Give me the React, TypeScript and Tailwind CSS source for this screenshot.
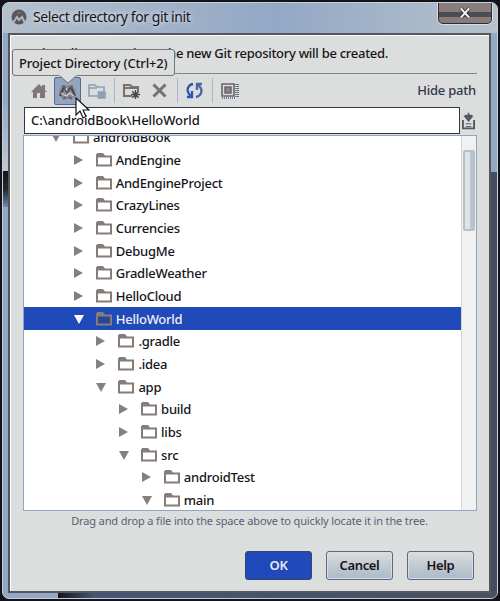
import React from "react";

type Row = { name: string; depth: number; open?: boolean; selected?: boolean };

const rows: Row[] = [
  { name: "androidBook", depth: 0, open: true },
  { name: "AndEngine", depth: 1 },
  { name: "AndEngineProject", depth: 1 },
  { name: "CrazyLines", depth: 1 },
  { name: "Currencies", depth: 1 },
  { name: "DebugMe", depth: 1 },
  { name: "GradleWeather", depth: 1 },
  { name: "HelloCloud", depth: 1 },
  { name: "HelloWorld", depth: 1, open: true, selected: true },
  { name: ".gradle", depth: 2 },
  { name: ".idea", depth: 2 },
  { name: "app", depth: 2, open: true },
  { name: "build", depth: 3 },
  { name: "libs", depth: 3 },
  { name: "src", depth: 3, open: true },
  { name: "androidTest", depth: 4 },
  { name: "main", depth: 4, open: true },
];

function Arrow({ open, selected }: { open?: boolean; selected?: boolean }) {
  return (
    <svg width="10" height="10" viewBox="0 0 10 10" className="shrink-0" fill={selected ? "#fff" : "#877f7c"}>
      {open ? <path d="M0 1h10L5 10z" /> : <path d="M0 0v10l9-5z" />}
    </svg>
  );
}

function Folder({ selected }: { selected?: boolean }) {
  return (
    <svg width="16" height="14" viewBox="0 0 16 14" className="ml-[12px] shrink-0">
      <path d="M0 13.5V1h1V0h6l2 2.5h7v11z" fill="#857d7a" />
      <path d="M2 4.5h12v7H2z" fill={selected ? "#2a4697" : "#fff"} />
    </svg>
  );
}

function TreeRow({ row }: { row: Row }) {
  return (
    <div className={"flex h-[22.67px] items-center " + (row.selected ? "bg-[#2049b9] text-[#eef0f6]" : "text-[#17151b]")}>
      <div className="flex items-center" style={{ paddingLeft: 27 + row.depth * 22.7 }}>
        <Arrow open={row.open} selected={row.selected} />
        <Folder selected={row.selected} />
        <span className="ml-1 text-[13px] font-medium leading-5 tracking-[-0.24px]">{row.name}</span>
      </div>
    </div>
  );
}

function Toolbar() {
  return (
    <div className="flex h-[33px] shrink-0 items-center pl-[21px] pr-[13px]">
      <svg width="16" height="16" viewBox="0 0 16 16" fill="#7e7775">
        <path d="M0 9 8 1l3 3V2h3v5l2 2h-2v6H9v-5H6v5H2V9z" />
      </svg>
      <div className="ml-[7px] flex h-[28px] w-[27px] items-center justify-center rounded-[2px] border border-[#526b8a] bg-[#91a5c0]">
        <svg width="21" height="22" viewBox="0 0 21 22" fill="none">
          <path d="M2 14C2 2 19 2 19 14l-4 5H6z" fill="#858890" />
          <path d="m3 16 4-9 3 5 4-5 4 9" stroke="#4b494f" strokeWidth="2" />
          <path d="m4 13 5 3 4-3 4 3M9 8l1 3" stroke="#c9ced5" strokeWidth="1.3" />
          <path d="m5 6 3 2m8-2-3 2M6 19l3-2m6 2-3-2" stroke="#635e61" strokeWidth="1.6" />
        </svg>
      </div>
      <svg width="18" height="16" viewBox="0 0 18 16" className="ml-[7px]" fill="none" stroke="#8f9fb4" strokeWidth="1.6">
        <path d="M10 13H1V2h6l2 2h7v4" /><path d="M1 5h8" />
        <path d="M10.5 9H17v6h-6.5z" fill="#8f9fb4" />
      </svg>
      <div className="ml-[8px] h-[25px] w-px bg-[#a7b6c8]" />
      <svg width="18" height="16" viewBox="0 0 18 16" className="ml-[8px]" fill="none" stroke="#777170" strokeWidth="2">
        <path d="M9 13H1V2h6l2 2h6v4M1 5h14" />
        <path d="M12.5 7v9M8 11.5h9M9.3 8.3l6.4 6.4M15.7 8.3l-6.4 6.4" stroke="#4b484c" strokeWidth="1.4" />
      </svg>
      <svg width="15" height="15" viewBox="0 0 15 15" className="ml-[11px]" stroke="#777170" strokeWidth="3">
        <path d="m1.5 1.5 12 12m0-12-12 12" />
      </svg>
      <div className="ml-[10px] h-[25px] w-px bg-[#a7b6c8]" />
      <svg width="17" height="17" viewBox="0 0 17 17" className="ml-[8px]" fill="none" strokeWidth="2.3">
        <path d="M7 2C2 3 0 8 3 12l2 2M1 15h5V9" stroke="#2c55b4" />
        <path d="M10 15c5-1 7-6 4-10l-2-2M16 2h-5v6" stroke="#4668a5" />
      </svg>
      <div className="ml-[9px] h-[25px] w-px bg-[#a7b6c8]" />
      <svg width="18" height="16" viewBox="0 0 18 16" className="ml-[8px]" fill="none" stroke="#686568">
        <path d="M1 1h12v12H1z" strokeWidth="1.6" /><path d="M4 4h6v6H4z" fill="#8a8483" strokeWidth="1.5" />
        <path d="M15 1v14M1 15h14" stroke="#6d829f" strokeWidth="2" strokeDasharray="1 1" />
        <path d="M17 1v14" strokeWidth="2" strokeDasharray="1 1" />
      </svg>
      <span className="ml-auto text-[13px] font-medium tracking-[-0.22px] text-[#30394e]">Hide path</span>
    </div>
  );
}

function Button({ children, primary }: { children: React.ReactNode; primary?: boolean }) {
  return (
    <button
      className={
        "h-[29px] w-[67px] rounded-[3px] border text-[13px] font-semibold tracking-[-0.35px] " +
        (primary ? "border-[#34466f] bg-[#2049b9] text-[#e7eaf2]" : "border-[#59697e] bg-linear-to-b from-[#dcdddd] via-[#c2cbd3] to-[#abb8c8] text-[#15141a] shadow-[inset_0_0_0_1px_#d8dee5]")
      }
    >
      {children}
    </button>
  );
}

export default function App() {
  return (
    <div className="relative h-[601px] w-[500px] overflow-hidden bg-[#15131a] pl-[2px] pr-[2px] pt-[2px] font-['Noto_Sans','Open_Sans',sans-serif]">
      <div className="relative flex h-[597px] flex-col overflow-hidden rounded-[7px] border border-[#c5d0db] bg-[#92a8c5]">
        <div className="absolute right-0 top-[169px] bottom-0 w-[8px] bg-[#444d60]" />
        <div className="absolute left-0 top-[98px] h-[74px] w-[6px] bg-linear-to-b from-[#92a8c5] to-[#c3c9cf]" />
        <div className="absolute left-0 top-[168px] h-[36px] w-[6px] bg-linear-to-b from-[#16141a] via-[#242630] to-[#738aab]" />
        <div className="absolute bottom-0 left-[55px] right-0 h-[7px] bg-linear-to-r from-[#17151b] from-0% via-[#425477] via-[8%] to-[#485261]" />
        <header className="relative flex h-[30px] shrink-0 items-center bg-linear-to-r from-[#b4c0cc] via-[#92a8c5] via-[55%] to-[#b6c1cc] pl-[8px]">
          <svg width="16" height="16" viewBox="0 0 16 16" fill="none" className="-mt-[2px]">
            <circle cx="8" cy="8" r="7.5" fill="#59575c" />
            <path d="m2 14 4-6 2 3 3-3 3 6" stroke="#aeb6c0" strokeWidth="2" />
            <path d="M6 4h4" stroke="#7d8087" />
          </svg>
          <h1 className="-mt-[3px] ml-[6px] text-[14px] tracking-[-0.42px] text-[#15141a] [text-shadow:0_0_5px_white]">Select directory for git init</h1>
          <button className="ml-auto mr-[5px] flex h-[21px] w-[54px] self-start items-center justify-center rounded-b-[5px] border border-t-0 border-[#302c34] bg-[linear-gradient(to_bottom,#887d7b_45%,#4b4d55_45%,#4b4d55_72%,#877c7a_72%)] shadow-[0_0_0_1px_#d8dde2]">
            <svg width="12" height="12" viewBox="0 0 13 12"><path d="m2 1 9 10m0-10L2 11" stroke="#292a32" strokeWidth="4" /><path d="m2 1 9 10m0-10L2 11" stroke="#f4f4f4" strokeWidth="2.3" /></svg>
          </button>
        </header>
        <main className="relative ml-[5px] mr-[6px] flex h-[560px] flex-col overflow-hidden border-2 border-[#55565e] bg-[#dcdddd] shadow-[inset_1px_1px_0_white]">
          <p className="mr-[12px] ml-[13px] h-[39px] shrink-0 whitespace-nowrap border-b border-[#7b8795] pl-[5px] pt-[8px] text-[13px] font-medium leading-5 tracking-[-0.28px] text-[#17151b]">
            Select directory where the new Git repository will be created.
          </p>
          <Toolbar />
          <div className="mr-[12px] ml-[14px] flex h-[27px] shrink-0 items-center">
            <div className="flex h-[27px] w-[436px] items-center border border-[#343744] bg-white pl-[6px] text-[13px] font-medium tracking-[-0.09px] text-[#17151b]">
              <span className="mt-px">C:\androidBook\HelloWorld</span>
            </div>
            <svg width="13" height="20" viewBox="0 0 14 20" className="ml-[2px]" fill="none" stroke="#55565e">
              <path d="M1 9v9h12V9" strokeWidth="2" /><path d="M4 13h6M4 16h6" /><path d="m3 5 4 5 4-5z" fill="#3b62aa" strokeWidth="1.5" /><path d="M7 1v6M3 4h8" strokeWidth="1.7" />
            </svg>
          </div>
          <div className="mt-px mr-[12px] ml-[13px] flex h-[376px] shrink-0 overflow-hidden border border-[#8fa5c0] bg-white">
            <div className="-mt-[10px] grow">{rows.map((row) => <TreeRow key={row.name} row={row} />)}</div>
            <div className="w-[15px] border-l border-[#d5d5d5] bg-[#f1f1f1] pl-px pr-px pt-[14px]">
              <div className="h-[81px] rounded-[2px] border-2 border-[#b4c0cc] bg-linear-to-r from-[#e1e2e2] from-60% to-[#bac4ce] to-60%" />
            </div>
          </div>
          <p className="mt-[2px] text-center text-[11px] leading-[16px] tracking-[-0.14px] text-[#596174]">Drag and drop a file into the space above to quickly locate it in the tree.</p>
          <div className="mt-[22px] flex justify-end gap-[14px] pr-[15px]">
            <Button primary>OK</Button>
            <Button>Cancel</Button>
            <Button>Help</Button>
          </div>
        </main>
      </div>
      <div className="absolute left-[12px] top-[49px] flex h-[27px] w-[163px] items-center rounded-[3px] border border-[#777575] bg-[#dcdddd] pl-[6px] text-[13px] font-medium tracking-[-0.17px] whitespace-nowrap text-[#17151b]">
        <span className="mt-[2px]">Project Directory (Ctrl+2)</span>
        <svg width="18" height="9" viewBox="0 0 18 9" className="absolute top-[25px] left-[46px]"><path d="M0 0h18L9 8z" fill="#dcdddd" /><path d="m1 1 8 7 8-7" fill="none" stroke="#777575" /></svg>
      </div>
      <svg width="15" height="23" viewBox="0 0 15 23" className="absolute left-[75px] top-[97px]"><path d="M1 1v17l4-4 3 7 3-1.5-3-6.5h6z" fill="white" stroke="#16151a" strokeWidth="1.2" /></svg>
    </div>
  );
}
